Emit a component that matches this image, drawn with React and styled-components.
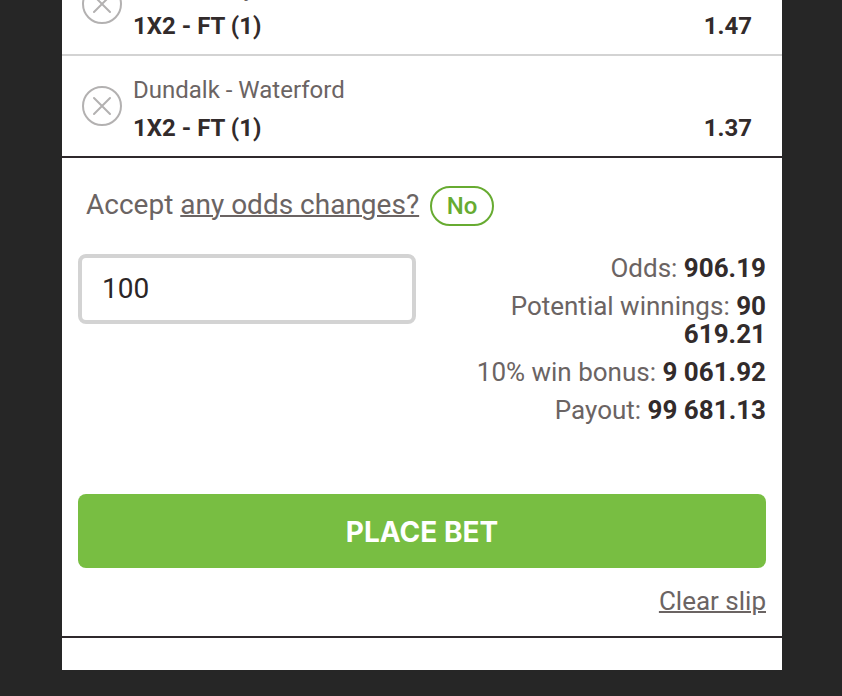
import React, { useState } from "react";
import styled, { createGlobalStyle } from "styled-components";

const GlobalStyle = createGlobalStyle`
  *, *::before, *::after { box-sizing: border-box; }
  html, body { margin: 0; background: #262626; }
  body {
    overflow: hidden;
    font-family: Roboto, sans-serif;
    color: #6b6463;
  }
  button, input { font-family: inherit; }
`;

const Page = styled.div`
  display: flex;
  flex-direction: column;
  justify-content: flex-end;
  height: 100vh;
  overflow: hidden;
  padding: 0 60px 26px 62px;
`;

const Slip = styled.main`
  flex: none;
  background: #fff;
  padding-bottom: 32px;
`;

const Selections = styled.ul`
  list-style: none;
  margin: 0;
  padding: 0;
  border-bottom: 2px solid #2f292c;
`;

const Selection = styled.li`
  display: flex;
  align-items: center;
  gap: 11px;
  height: 100px;
  padding: 0 30px 0 20px;

  & + & {
    height: 102px;
    border-top: 2px solid #d3d3d3;
  }
`;

const RemoveButton = styled.button`
  display: flex;
  flex: none;
  padding: 0;
  border: 0;
  background: none;
  cursor: pointer;
`;

const SelectionText = styled.div`
  flex: 1;
  padding-top: 6px;
`;

const Match = styled.div`
  font-size: 24px;
  line-height: 38px;
`;

const Market = styled.div`
  display: flex;
  justify-content: space-between;
  font-size: 24px;
  line-height: 38px;
  font-weight: 700;
  color: #322b2b;
`;

const BetForm = styled.form`
  padding: 28px 16px 20px;
  border-bottom: 2px solid #2f292c;
`;

const AcceptRow = styled.div`
  display: flex;
  align-items: center;
  gap: 11px;
  padding-left: 8px;
  font-size: 28px;
  line-height: 36px;
`;

const AcceptLabel = styled.span`
  padding-bottom: 2px;
`;

const TextLink = styled.a`
  color: inherit;
  text-decoration: underline;
  text-decoration-thickness: 2px;
`;

const Toggle = styled.button`
  width: 64px;
  height: 40px;
  padding: 0;
  border: 2px solid #67ab31;
  border-radius: 20px;
  background: #fff;
  color: #67ab31;
  font-size: 24px;
  font-weight: 500;
  cursor: pointer;
`;

const StakeRow = styled.div`
  display: flex;
  justify-content: space-between;
  align-items: flex-start;
  min-height: 268px;
  padding-top: 28px;
`;

const StakeInput = styled.input`
  width: 338px;
  min-width: 0;
  height: 70px;
  padding: 0 20px 2px;
  border: 4px solid #d3d3d3;
  border-radius: 8px;
  color: #2b2526;
  font-size: 28px;
  outline: 0;
`;

const Totals = styled.dl`
  width: 43%;
  margin: 0;
  text-align: right;
  font-size: 26px;
  line-height: 28px;
`;

const Total = styled.div`
  margin-bottom: 10px;

  dt, dd { display: inline; margin: 0; }
  dd { font-weight: 700; color: #322b2b; }
`;

const PlaceBet = styled.button`
  display: block;
  width: 100%;
  height: 74px;
  padding: 2px 0 0;
  border: 0;
  border-radius: 8px;
  background: #78be42;
  color: #fff;
  font-family: Inter, sans-serif;
  font-size: 28px;
  font-weight: 700;
  cursor: pointer;
`;

const ClearRow = styled.div`
  margin-top: 18px;
  text-align: right;
  font-size: 26px;
  line-height: 30px;
`;

const selections = [
  { match: "UCD - Derry", market: "1X2 - FT (1)", odds: "1.47" },
  { match: "Dundalk - Waterford", market: "1X2 - FT (1)", odds: "1.37" },
];

const totals = [
  { label: "Odds:", value: "906.19" },
  { label: "Potential winnings:", value: "90 619.21" },
  { label: "10% win bonus:", value: "9 061.92" },
  { label: "Payout:", value: "99 681.13" },
];

function RemoveIcon() {
  return (
    <svg width="40" height="40" viewBox="0 0 40 40" fill="none" stroke="#b3b1b1" strokeWidth="2" strokeLinecap="round" aria-hidden="true">
      <circle cx="20" cy="20" r="19" />
      <path d="M12 12 28 28M28 12 12 28" />
    </svg>
  );
}

export default function App() {
  const [accept, setAccept] = useState(false);
  const [stake, setStake] = useState("100");

  return (
    <Page>
      <GlobalStyle />
      <Slip>
        <Selections>
          {selections.map(({ match, market, odds }) => (
            <Selection key={match}>
              <RemoveButton type="button" aria-label={`Remove ${match}`}>
                <RemoveIcon />
              </RemoveButton>
              <SelectionText>
                <Match>{match}</Match>
                <Market>
                  <span>{market}</span>
                  <span>{odds}</span>
                </Market>
              </SelectionText>
            </Selection>
          ))}
        </Selections>
        <BetForm onSubmit={(event) => event.preventDefault()}>
          <AcceptRow>
            <AcceptLabel>
              Accept <TextLink href="#odds">any odds changes?</TextLink>
            </AcceptLabel>
            <Toggle type="button" aria-pressed={accept} onClick={() => setAccept(!accept)}>
              {accept ? "Yes" : "No"}
            </Toggle>
          </AcceptRow>
          <StakeRow>
            <StakeInput
              aria-label="Stake"
              inputMode="decimal"
              value={stake}
              onChange={(event) => setStake(event.target.value)}
            />
            <Totals>
              {totals.map(({ label, value }) => (
                <Total key={label}>
                  <dt>{label}</dt> <dd>{value}</dd>
                </Total>
              ))}
            </Totals>
          </StakeRow>
          <PlaceBet type="submit">PLACE BET</PlaceBet>
          <ClearRow>
            <TextLink href="#clear">Clear slip</TextLink>
          </ClearRow>
        </BetForm>
      </Slip>
    </Page>
  );
}
